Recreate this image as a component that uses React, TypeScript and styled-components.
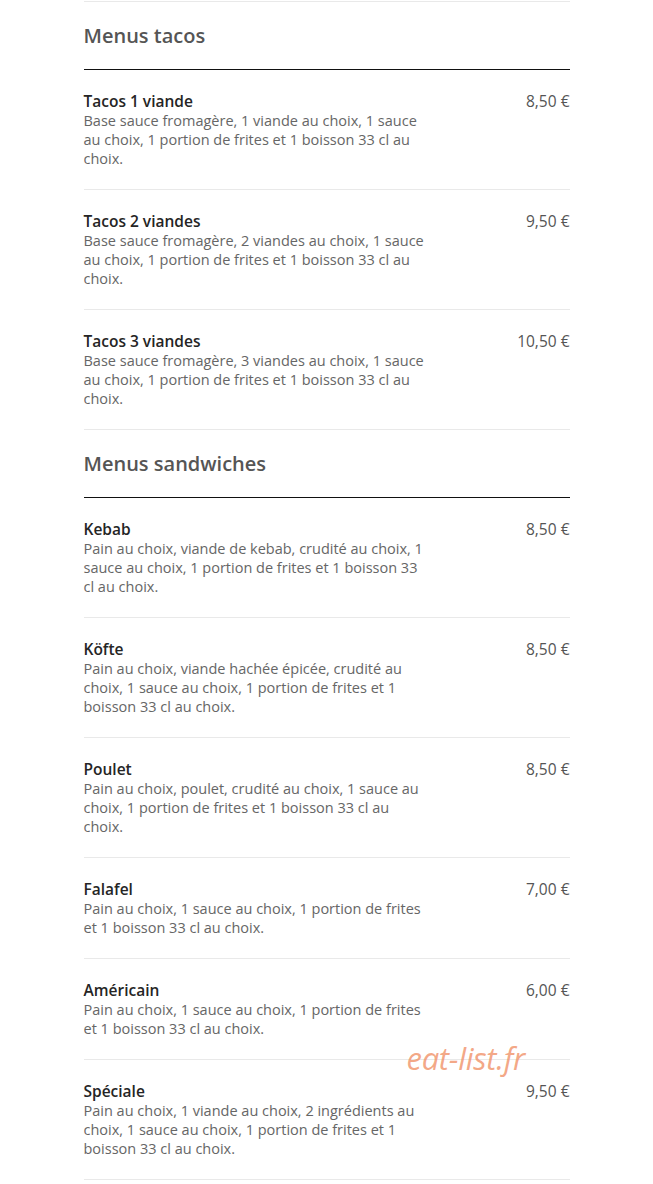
import React from 'react';
import styled, { createGlobalStyle } from 'styled-components';

interface MenuItem {
  name: string;
  description: string;
  price: string;
}

interface MenuSection {
  title: string;
  items: MenuItem[];
}

const sections: MenuSection[] = [
  {
    title: 'Menus tacos',
    items: [
      {
        name: 'Tacos 1 viande',
        description: 'Base sauce fromagère, 1 viande au choix, 1 sauce au choix, 1 portion de frites et 1 boisson 33 cl au choix.',
        price: '8,50 €',
      },
      {
        name: 'Tacos 2 viandes',
        description: 'Base sauce fromagère, 2 viandes au choix, 1 sauce au choix, 1 portion de frites et 1 boisson 33 cl au choix.',
        price: '9,50 €',
      },
      {
        name: 'Tacos 3 viandes',
        description: 'Base sauce fromagère, 3 viandes au choix, 1 sauce au choix, 1 portion de frites et 1 boisson 33 cl au choix.',
        price: '10,50 €',
      },
    ],
  },
  {
    title: 'Menus sandwiches',
    items: [
      {
        name: 'Kebab',
        description: 'Pain au choix, viande de kebab, crudité au choix, 1 sauce au choix, 1 portion de frites et 1 boisson 33 cl au choix.',
        price: '8,50 €',
      },
      {
        name: 'Köfte',
        description: 'Pain au choix, viande hachée épicée, crudité au choix, 1 sauce au choix, 1 portion de frites et 1 boisson 33 cl au choix.',
        price: '8,50 €',
      },
      {
        name: 'Poulet',
        description: 'Pain au choix, poulet, crudité au choix, 1 sauce au choix, 1 portion de frites et 1 boisson 33 cl au choix.',
        price: '8,50 €',
      },
      {
        name: 'Falafel',
        description: 'Pain au choix, 1 sauce au choix, 1 portion de frites et 1 boisson 33 cl au choix.',
        price: '7,00 €',
      },
      {
        name: 'Américain',
        description: 'Pain au choix, 1 sauce au choix, 1 portion de frites et 1 boisson 33 cl au choix.',
        price: '6,00 €',
      },
      {
        name: 'Spéciale',
        description: 'Pain au choix, 1 viande au choix, 2 ingrédients au choix, 1 sauce au choix, 1 portion de frites et 1 boisson 33 cl au choix.',
        price: '9,50 €',
      },
    ],
  },
];

const GlobalStyle = createGlobalStyle`
  body {
    margin: 0;
    background: #fff;
    font-family: "Open Sans", "Liberation Sans", sans-serif;
  }
`;

const Page = styled.div`
  position: relative;
  width: 486px;
  margin: 0 auto;
  padding-top: 1px;
`;

const TopDivider = styled.div`
  height: 1px;
  background: #e9e9e9;
`;

const SectionTitle = styled.h2`
  margin: 0;
  padding: 20px 0 19px;
  font-size: 20px;
  line-height: 28px;
  font-weight: 600;
  color: #555;
  border-bottom: 1px solid #111;
`;

const ItemRow = styled.div`
  display: flex;
  justify-content: space-between;
  align-items: flex-start;
  padding: 21px 0;
  border-bottom: 1px solid #e9e9e9;
`;

const ItemText = styled.div`
  max-width: 342px;
`;

const ItemName = styled.div`
  font-size: 15.5px;
  line-height: 20px;
  font-weight: 600;
  color: #252525;
`;

const ItemDescription = styled.div`
  font-size: 14.5px;
  line-height: 19px;
  color: #666;
`;

const ItemPrice = styled.div`
  font-size: 15.5px;
  line-height: 20px;
  color: #555;
  white-space: nowrap;
`;

const Watermark = styled.div`
  position: absolute;
  left: 323px;
  top: 1037px;
  font-size: 31px;
  font-style: italic;
  color: rgba(240, 140, 95, 0.75);
  letter-spacing: -0.3px;
  pointer-events: none;
`;

const App = () => {
  return (
    <>
      <GlobalStyle />
      <Page>
        <TopDivider />
        {sections.map((section) => (
          <section key={section.title}>
            <SectionTitle>{section.title}</SectionTitle>
            {section.items.map((item) => (
              <ItemRow key={item.name}>
                <ItemText>
                  <ItemName>{item.name}</ItemName>
                  <ItemDescription>{item.description}</ItemDescription>
                </ItemText>
                <ItemPrice>{item.price}</ItemPrice>
              </ItemRow>
            ))}
          </section>
        ))}
        <Watermark>eat-list.fr</Watermark>
      </Page>
    </>
  );
};

export default App;
